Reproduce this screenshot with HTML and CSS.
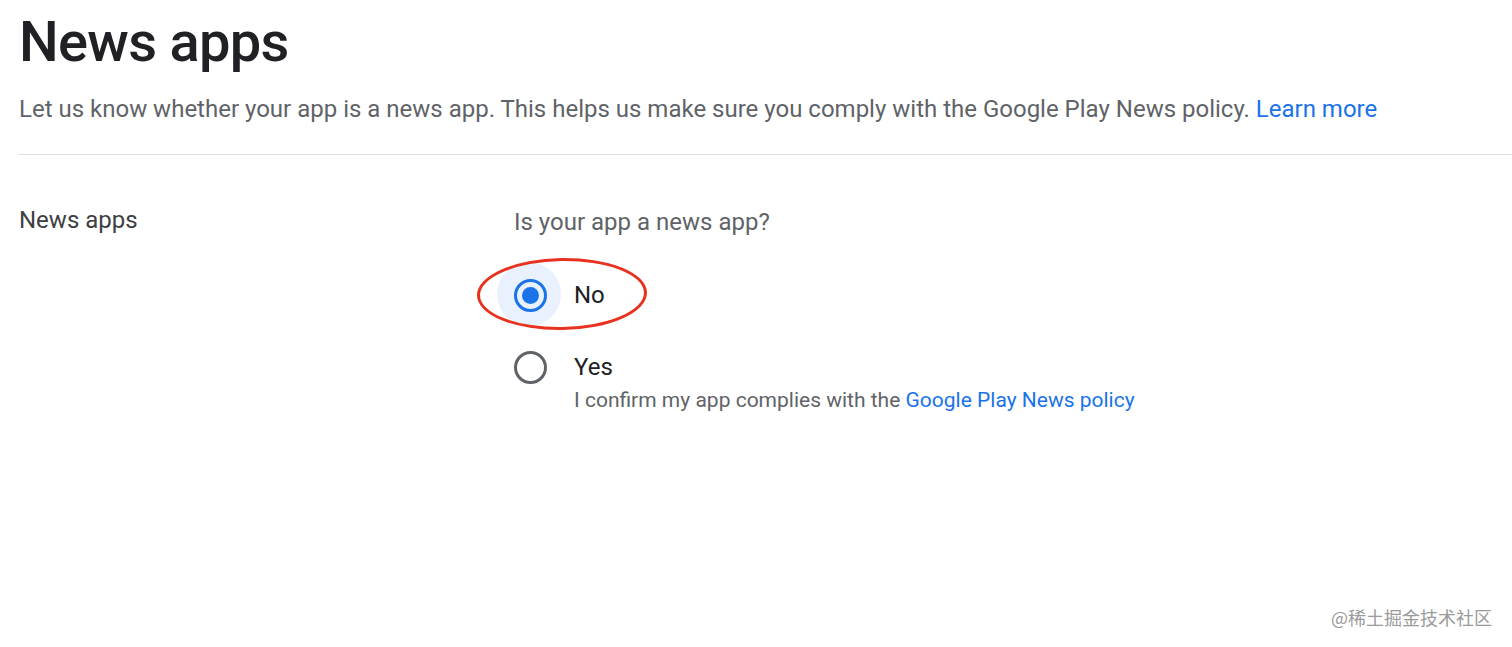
FILE: index.html
```html
<!DOCTYPE html>
<html lang="en">
<head>
  <meta charset="UTF-8">
  <title>News apps</title>
  <link rel="stylesheet" href="styles.css">
</head>
<body>
  <div class="page">
    <!-- Header -->
    <header class="page-header">
      <h1>News apps</h1>
      <p class="intro">
        Let us know whether your app is a news app. This helps us make sure you comply with the Google Play News policy.
        <a href="#">Learn more</a>
      </p>
    </header>

    <!-- Form section -->
    <section class="form-row">
      <div class="row-label">News apps</div>
      <div class="row-body">
        <div class="question">Is your app a news app?</div>

        <label class="option checked">
          <span class="radio"></span>
          <span class="option-text">No</span>
          <span class="annotation"></span>
        </label>

        <label class="option">
          <span class="radio"></span>
          <span class="option-text">Yes</span>
        </label>
        <div class="option-hint">
          I confirm my app complies with the <a href="#">Google Play News policy</a>
        </div>
      </div>
    </section>
  </div>

  <div class="watermark">@稀土掘金技术社区</div>
</body>
</html>
```

FILE: styles.css
```css
body {
  margin: 0;
  background-color: #fff;
  font-family: Roboto, "Liberation Sans", sans-serif;
  color: #3c4043;
  overflow: hidden;
}

a {
  color: #1a73e8;
  text-decoration: none;
}

.page {
  padding-left: 19px;
}

/* Header */
.page-header {
  border-bottom: 1px solid #dadce0;
  padding-bottom: 29px;
}

.page-header h1 {
  margin: 0;
  padding-top: 10px;
  font-size: 56px;
  font-weight: 500;
  line-height: 64px;
  letter-spacing: -0.7px;
  color: #202124;
}

.intro {
  margin: 19px 0 0;
  font-size: 24px;
  line-height: 32px;
  color: #5f6368;
}

/* Form row */
.form-row {
  display: grid;
  grid-template-columns: 495px 1fr;
  padding-top: 49px;
}

.row-label {
  font-size: 24px;
  line-height: 32px;
  color: #3c4043;
}

.question {
  font-size: 24px;
  line-height: 32px;
  color: #5f6368;
  margin-top: 2px;
  margin-bottom: 25px;
}

.option {
  display: flex;
  align-items: center;
  gap: 27px;
  height: 64px;
  position: relative;
  margin-bottom: 8px;
}

.radio {
  width: 33px;
  height: 33px;
  box-sizing: border-box;
  border: 3px solid #5f6368;
  border-radius: 50%;
  position: relative;
  flex-shrink: 0;
}

.option.checked .radio {
  border-color: #1a73e8;
}

.option.checked .radio::before {
  content: "";
  position: absolute;
  left: 50%;
  top: 50%;
  width: 64px;
  height: 64px;
  margin: -33px 0 0 -34px;
  border-radius: 50%;
  background-color: rgba(26, 115, 232, 0.1);
}

.option.checked .radio::after {
  content: "";
  position: absolute;
  left: 5px;
  top: 5px;
  width: 17px;
  height: 17px;
  border-radius: 50%;
  background-color: #1a73e8;
}

.option-text {
  font-size: 24px;
  color: #202124;
}

.option-hint {
  margin-top: -21px;
  padding-left: 60px;
  font-size: 21px;
  line-height: 28px;
  color: #5f6368;
}

/* Red hand-drawn circle around the chosen answer */
.annotation {
  position: absolute;
  left: -37px;
  top: -5px;
  width: 170px;
  height: 72px;
  box-sizing: border-box;
  border: 3.5px solid #e8321f;
  border-radius: 50%;
  transform: rotate(-1deg);
}

.watermark {
  position: absolute;
  right: 20px;
  bottom: 17px;
  font-family: "Noto Sans CJK SC", sans-serif;
  font-size: 18px;
  color: #9a9a9a;
  text-shadow: 0 0 2px #fff;
}
```
